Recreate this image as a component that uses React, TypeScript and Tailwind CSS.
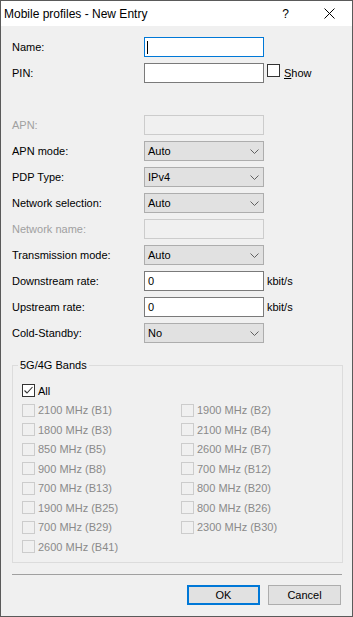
import React from "react";

const bands: [string, string][] = [
  ["2100 MHz (B1)", "1900 MHz (B2)"],
  ["1800 MHz (B3)", "2100 MHz (B4)"],
  ["850 MHz (B5)", "2600 MHz (B7)"],
  ["900 MHz (B8)", "700 MHz (B12)"],
  ["700 MHz (B13)", "800 MHz (B20)"],
  ["1900 MHz (B25)", "800 MHz (B26)"],
  ["700 MHz (B29)", "2300 MHz (B30)"],
  ["2600 MHz (B41)", ""],
];

function Chevron() {
  return (
    <svg width="9" height="5" viewBox="0 0 9 5" className="mr-[4px]">
      <path d="M0.5 0.5 L4.5 4.5 L8.5 0.5" fill="none" stroke="#606060" strokeWidth="1" />
    </svg>
  );
}

function Select({ value }: { value: string }) {
  return (
    <div className="flex h-[20px] w-[120px] items-center justify-between border border-[#adadad] bg-[#e1e1e1] pl-[3px]">
      <span>{value}</span>
      <Chevron />
    </div>
  );
}

function TextBox({ value, disabled, focused }: { value?: string; disabled?: boolean; focused?: boolean }) {
  return (
    <div
      className={
        disabled
          ? "h-[20px] w-[120px] border border-[#cccccc] bg-[#f0f0f0]"
          : focused
          ? "flex h-[20px] w-[120px] items-center border border-[#0078d7] bg-white pl-[2px]"
          : "flex h-[20px] w-[120px] items-center border border-[#7a7a7a] bg-white pl-[3px]"
      }
    >
      {focused && <span className="h-[13px] w-px bg-black" />}
      {value}
    </div>
  );
}

function Check({ checked, disabled }: { checked?: boolean; disabled?: boolean }) {
  return (
    <span
      className={
        disabled
          ? "inline-block h-[13px] w-[13px] shrink-0 border border-[#cccccc] bg-[#f0f0f0]"
          : "inline-flex h-[13px] w-[13px] shrink-0 items-center justify-center border border-[#333333] bg-white"
      }
    >
      {checked && (
        <svg width="11" height="11" viewBox="0 0 11 11">
          <path d="M1.5 5.5 L4 8 L9.5 2" fill="none" stroke="#333333" strokeWidth="1.1" />
        </svg>
      )}
    </span>
  );
}

function Row({ label, disabled, children }: { label: string; disabled?: boolean; children?: React.ReactNode }) {
  return (
    <div className="flex h-[20px] items-center">
      <span className={disabled ? "w-[132px] text-[#a0a0a0]" : "w-[132px]"}>{label}</span>
      {children}
    </div>
  );
}

export default function App() {
  return (
    <div className="flex h-[617px] w-[353px] flex-col border border-[#5a5a5a] bg-[#f0f0f0] font-['Liberation_Sans',Arial,sans-serif] text-[11px] text-black">
      <div className="flex h-[25px] shrink-0 items-center bg-white pl-[3px] text-[12px]">
        <span className="flex-1">Mobile profiles - New Entry</span>
        <span className="mr-[35px]">?</span>
        <svg width="11" height="11" viewBox="0 0 11 11" className="mr-[17px]">
          <path d="M0.5 0.5 L10.5 10.5 M10.5 0.5 L0.5 10.5" stroke="#000" strokeWidth="1" />
        </svg>
      </div>

      <div className="flex flex-col px-[11px] pt-[11px]">
        <div className="flex flex-col gap-[6px]">
          <Row label="Name:">
            <TextBox focused />
          </Row>
          <Row label="PIN:">
            <TextBox />
            <span className="ml-[3px]">
              <Check />
            </span>
            <span className="ml-[4px]">
              <span className="underline">S</span>how
            </span>
          </Row>
          <div className="h-[20px]" />
          <Row label="APN:" disabled>
            <TextBox disabled />
          </Row>
          <Row label="APN mode:">
            <Select value="Auto" />
          </Row>
          <Row label="PDP Type:">
            <Select value="IPv4" />
          </Row>
          <Row label="Network selection:">
            <Select value="Auto" />
          </Row>
          <Row label="Network name:" disabled>
            <TextBox disabled />
          </Row>
          <Row label="Transmission mode:">
            <Select value="Auto" />
          </Row>
          <Row label="Downstream rate:">
            <TextBox value="0" />
            <span className="ml-[3px]">kbit/s</span>
          </Row>
          <Row label="Upstream rate:">
            <TextBox value="0" />
            <span className="ml-[3px]">kbit/s</span>
          </Row>
          <Row label="Cold-Standby:">
            <Select value="No" />
          </Row>
        </div>

        <div className="relative mt-[22px] h-[198px] w-[331px] border border-[#dcdcdc]">
          <span className="absolute -top-[8px] left-[5px] bg-[#f0f0f0] px-[2px] leading-[14px]">5G/4G Bands</span>
          <div className="flex flex-col pl-[9px] pt-[15px]">
            <div className="flex h-[19.5px] items-center gap-[3px]">
              <Check checked />
              <span>All</span>
            </div>
            {bands.map(([a, b]) => (
              <div key={a} className="grid h-[19.5px] grid-cols-[159px_1fr] items-center text-[#8a8a8a]">
                <div className="flex items-center gap-[3px]">
                  <Check disabled />
                  <span>{a}</span>
                </div>
                {b && (
                  <div className="flex items-center gap-[3px]">
                    <Check disabled />
                    <span>{b}</span>
                  </div>
                )}
              </div>
            ))}
          </div>
        </div>

        <div className="mt-[11px] h-px w-[330px] bg-[#a0a0a0]" />

        <div className="mt-[10px] flex justify-end gap-[8px]">
          <button className="flex h-[20px] w-[73px] items-center justify-center border-2 border-[#0078d7] bg-[#e1e1e1]">
            OK
          </button>
          <button className="flex h-[20px] w-[73px] items-center justify-center border border-[#adadad] bg-[#e1e1e1]">
            Cancel
          </button>
        </div>
      </div>
    </div>
  );
}
